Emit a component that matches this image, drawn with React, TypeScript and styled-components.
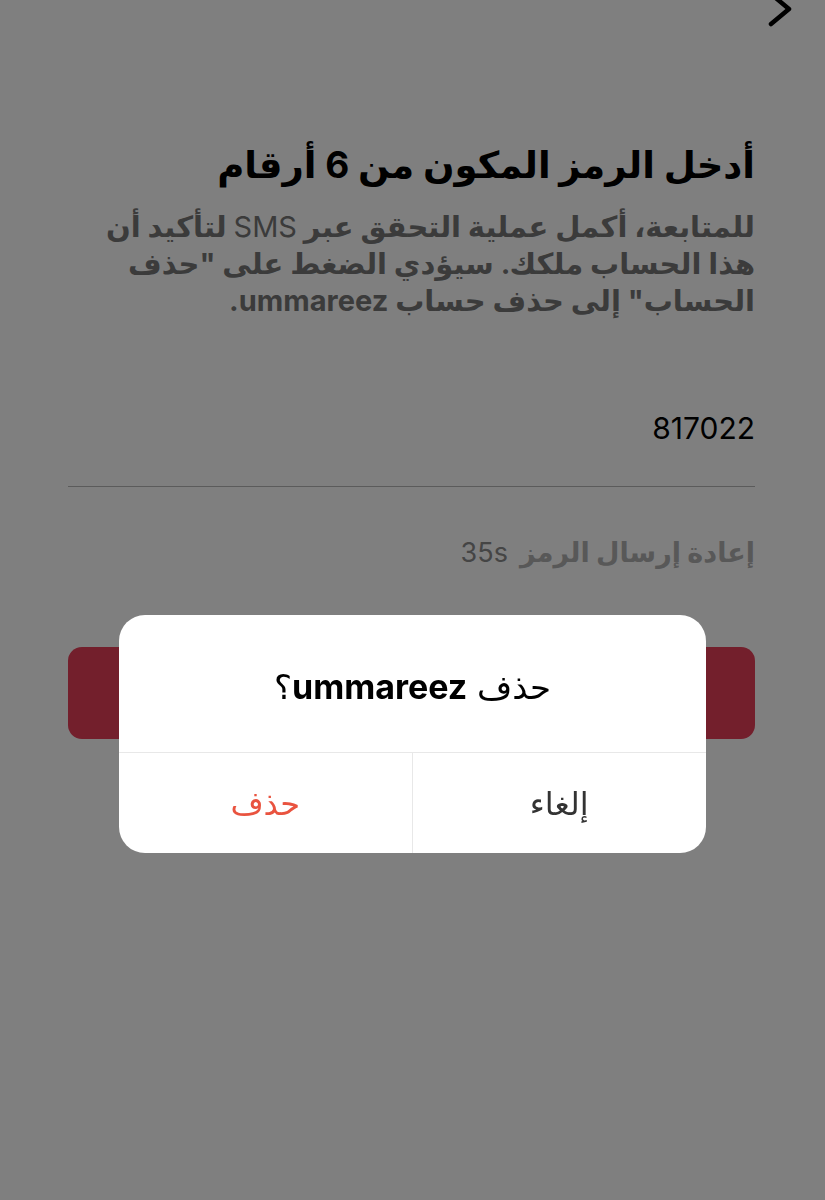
import React from "react";
import styled, { createGlobalStyle } from "styled-components";

const GlobalStyle = createGlobalStyle`
  html, body {
    margin: 0;
    padding: 0;
    background: #ffffff;
  }
  * {
    box-sizing: border-box;
  }
`;

const fontStack = `"Inter", "Noto Sans", "DejaVu Sans", sans-serif`;

const Page = styled.div`
  position: relative;
  width: 825px;
  min-height: 1200px;
  background: #ffffff;
  direction: rtl;
  font-family: ${fontStack};
  padding: 0 70px 0 68px;
  overflow: hidden;
`;

const TopBar = styled.div`
  height: 30px;
  display: flex;
  justify-content: flex-start;
  margin-right: -40px;
`;

const Title = styled.h1`
  margin: 110px 0 0;
  font-size: 37px;
  font-weight: 700;
  line-height: 50px;
  color: #000000;
`;

const Description = styled.p`
  margin: 18px 0 0;
  padding-left: 12px;
  font-size: 29px;
  font-weight: 700;
  line-height: 37px;
  color: #777777;
`;

const Light = styled.span`
  font-weight: 400;
`;

const CodeField = styled.div`
  margin-top: 89px;
  padding-bottom: 38px;
  border-bottom: 1.5px solid #b6b6b6;
  font-size: 30px;
  line-height: 40px;
  color: #000000;
  direction: ltr;
  text-align: right;
`;

const Resend = styled.div`
  margin-top: 46px;
  display: flex;
  gap: 12px;
  align-items: baseline;
  font-size: 27px;
  line-height: 40px;
`;

const ResendLabel = styled.span`
  font-weight: 700;
  color: #b0b0b0;
`;

const Countdown = styled.span`
  font-weight: 400;
  color: #8a8a8a;
  direction: ltr;
`;

const PrimaryButton = styled.button`
  margin-top: 74px;
  width: 100%;
  height: 92px;
  border: none;
  border-radius: 14px;
  background: #e63e58;
`;

const Overlay = styled.div`
  position: fixed;
  inset: 0;
  background: rgba(0, 0, 0, 0.5);
  display: flex;
  justify-content: center;
  align-items: flex-start;
  padding-top: 615px;
  direction: rtl;
  font-family: ${fontStack};
`;

const Dialog = styled.div`
  width: 587px;
  background: #ffffff;
  border-radius: 26px;
  overflow: hidden;
`;

const DialogTitle = styled.div`
  height: 138px;
  display: flex;
  align-items: center;
  justify-content: center;
  padding-top: 6px;
  font-size: 34px;
  color: #000000;
  border-bottom: 1px solid #e8e8e8;
`;

const Bold = styled.b`
  font-weight: 700;
`;

const Actions = styled.div`
  display: grid;
  grid-template-columns: 1fr 1fr;
  height: 100px;
`;

const Action = styled.button<{ $danger?: boolean }>`
  border: none;
  background: transparent;
  font-family: ${fontStack};
  font-size: 32px;
  color: ${(p) => (p.$danger ? "#e9533f" : "#333333")};
  & + & {
    border-right: 1px solid #e8e8e8;
  }
`;

export default function App() {
  return (
    <>
      <GlobalStyle />
      <Page>
        <TopBar>
          <svg width="30" height="30" viewBox="0 0 30 30">
            <polyline
              points="6,-6 24,9 6,24"
              fill="none"
              stroke="#000"
              strokeWidth="4.5"
              strokeLinecap="round"
              strokeLinejoin="round"
            />
          </svg>
        </TopBar>
        <Title>أدخل الرمز المكون من 6 أرقام</Title>
        <Description>
          للمتابعة، أكمل عملية التحقق عبر <Light>SMS</Light> لتأكيد أن هذا الحساب
          ملكك. سيؤدي الضغط على "حذف الحساب" إلى حذف حساب ummareez.
        </Description>
        <CodeField>817022</CodeField>
        <Resend>
          <ResendLabel>إعادة إرسال الرمز</ResendLabel>
          <Countdown>35s</Countdown>
        </Resend>
        <PrimaryButton />
      </Page>
      <Overlay>
        <Dialog>
          <DialogTitle>
            <span>
              حذف <Bold>ummareez</Bold>؟
            </span>
          </DialogTitle>
          <Actions>
            <Action>إلغاء</Action>
            <Action $danger>حذف</Action>
          </Actions>
        </Dialog>
      </Overlay>
    </>
  );
}
